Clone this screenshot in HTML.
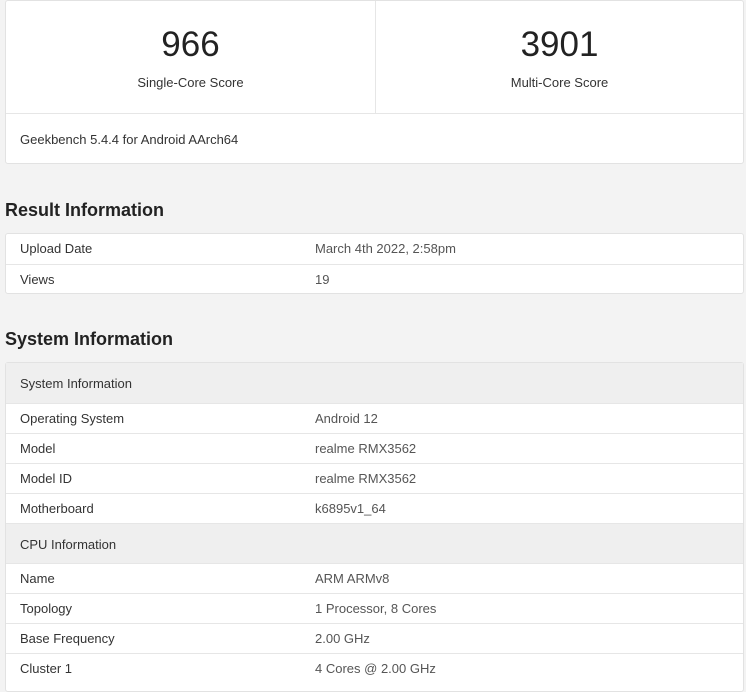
<!DOCTYPE html>
<html><head><style>
body{margin:0;background:#f3f3f3;font-family:"Liberation Sans",sans-serif;color:#333;width:746px;height:675px;overflow:hidden;position:relative}
.card{position:absolute;left:5px;width:739px;background:#fff;border:1px solid #e2e2e2;border-radius:3px;box-sizing:border-box}
.score{position:absolute;top:0;height:112px;width:369px;text-align:center}
.num{position:absolute;top:24px;width:100%;font-size:35px;color:#222}
.lab{position:absolute;top:74px;width:100%;font-size:13px;color:#333}
h2{position:absolute;left:5px;margin:0;font-size:18px;font-weight:bold;color:#222}
.row{position:absolute;left:0;width:100%;height:30px;border-top:1px solid #e6e6e6;font-size:13px;box-sizing:border-box}
.row span{position:absolute;top:7px}
.row .k{left:14px}.row .v{left:309px;color:#555}
.hd{background:#efefef;height:40px}
.hd span{top:13px}
</style></head><body>
<div class="card" style="top:0;height:164px">
 <div class="score" style="left:0;border-right:1px solid #e6e6e6"><div class="num">966</div><div class="lab">Single-Core Score</div></div>
 <div class="score" style="left:369px"><div class="num">3901</div><div class="lab">Multi-Core Score</div></div>
 <div style="position:absolute;top:112px;left:0;width:100%;border-top:1px solid #e6e6e6;height:50px"><span style="position:absolute;left:14px;top:18px;font-size:13px">Geekbench 5.4.4 for Android AArch64</span></div>
</div>
<h2 style="top:200px">Result Information</h2>
<div class="card" style="top:233px;height:61px">
 <div class="row" style="top:0;border-top:none"><span class="k">Upload Date</span><span class="v">March 4th 2022, 2:58pm</span></div>
 <div class="row" style="top:30px"><span class="k">Views</span><span class="v">19</span></div>
</div>
<h2 style="top:329px">System Information</h2>
<div class="card" style="top:362px;height:330px">
 <div class="row hd" style="top:0;border-top:none"><span class="k">System Information</span></div>
 <div class="row" style="top:40px"><span class="k">Operating System</span><span class="v">Android 12</span></div>
 <div class="row" style="top:70px"><span class="k">Model</span><span class="v">realme RMX3562</span></div>
 <div class="row" style="top:100px"><span class="k">Model ID</span><span class="v">realme RMX3562</span></div>
 <div class="row" style="top:130px"><span class="k">Motherboard</span><span class="v">k6895v1_64</span></div>
 <div class="row hd" style="top:160px"><span class="k">CPU Information</span></div>
 <div class="row" style="top:200px"><span class="k">Name</span><span class="v">ARM ARMv8</span></div>
 <div class="row" style="top:230px"><span class="k">Topology</span><span class="v">1 Processor, 8 Cores</span></div>
 <div class="row" style="top:260px"><span class="k">Base Frequency</span><span class="v">2.00 GHz</span></div>
 <div class="row" style="top:290px"><span class="k">Cluster 1</span><span class="v">4 Cores @ 2.00 GHz</span></div>
</div>
</body></html>
